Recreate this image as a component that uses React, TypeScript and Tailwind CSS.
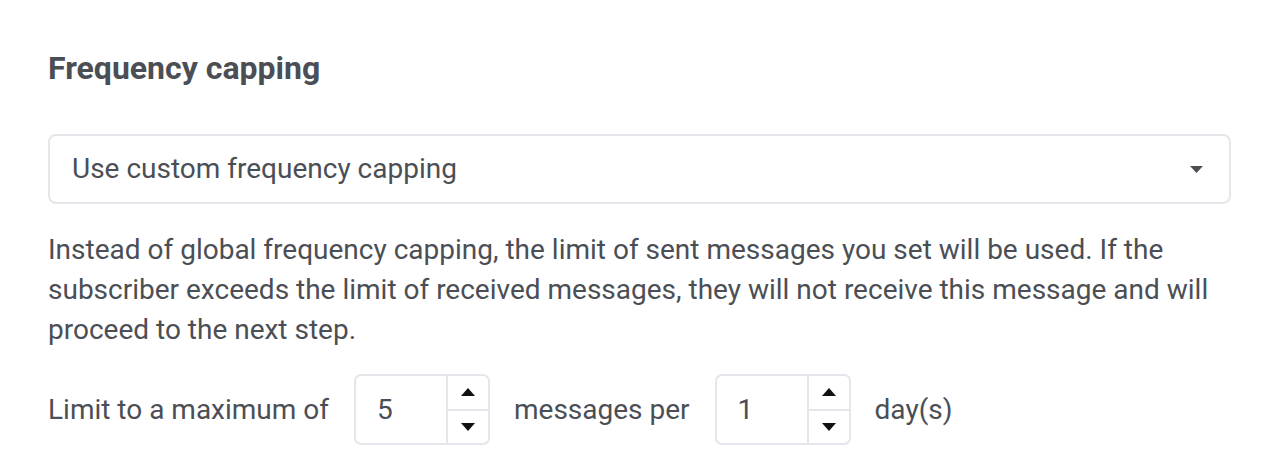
import { useState } from "react";

function Caret({ up = false }: { up?: boolean }) {
  return (
    <svg width="14" height="8" viewBox="0 0 14 8" className="block">
      {up ? <path d="M0 8 L7 0 L14 8 Z" fill="#111" /> : <path d="M0 0 L7 8 L14 0 Z" fill="#111" />}
    </svg>
  );
}

function NumberBox({ value }: { value: string }) {
  return (
    <div className="flex h-[71px] w-[136px] rounded-[7px] border-2 border-[#e3e6ea] bg-white">
      <div className="flex flex-1 items-center pl-[21px]">{value}</div>
      <div className="flex w-[42px] flex-col border-l-2 border-[#e3e6ea]">
        <div className="flex flex-1 items-center justify-center border-b-2 border-[#e3e6ea]">
          <Caret up />
        </div>
        <div className="flex flex-1 items-center justify-center">
          <Caret />
        </div>
      </div>
    </div>
  );
}

export default function App() {
  const [mode] = useState("Use custom frequency capping");

  return (
    <main
      className="min-h-[476px] bg-white pl-12 pr-[50px] pt-[46px] text-[28px] text-[#4b4f55]"
      style={{ fontFamily: "Roboto, 'Liberation Sans', sans-serif" }}
    >
      <h2 className="text-[32px] font-bold leading-[44px]">Frequency capping</h2>

      <div className="mt-[44px] flex h-[70px] items-center justify-between rounded-[8px] border-2 border-[#e3e6ea] pl-[22px] pr-[26px]">
        <span>{mode}</span>
        <svg width="13" height="7" viewBox="0 0 13 7">
          <path d="M0 0 L6.5 7 L13 0 Z" fill="#4b4f55" />
        </svg>
      </div>

      <p className="mt-[26px] leading-[40px]">
        Instead of global frequency capping, the limit of sent messages you set will be used. If the subscriber
        exceeds the limit of received messages, they will not receive this message and will proceed to the next
        step.
      </p>

      <div className="mt-[24px] flex items-center">
        <span>Limit to a maximum of</span>
        <div className="ml-[25px]">
          <NumberBox value="5" />
        </div>
        <span className="ml-[24px]">messages per</span>
        <div className="ml-[25px]">
          <NumberBox value="1" />
        </div>
        <span className="ml-[24px]">day(s)</span>
      </div>
    </main>
  );
}
